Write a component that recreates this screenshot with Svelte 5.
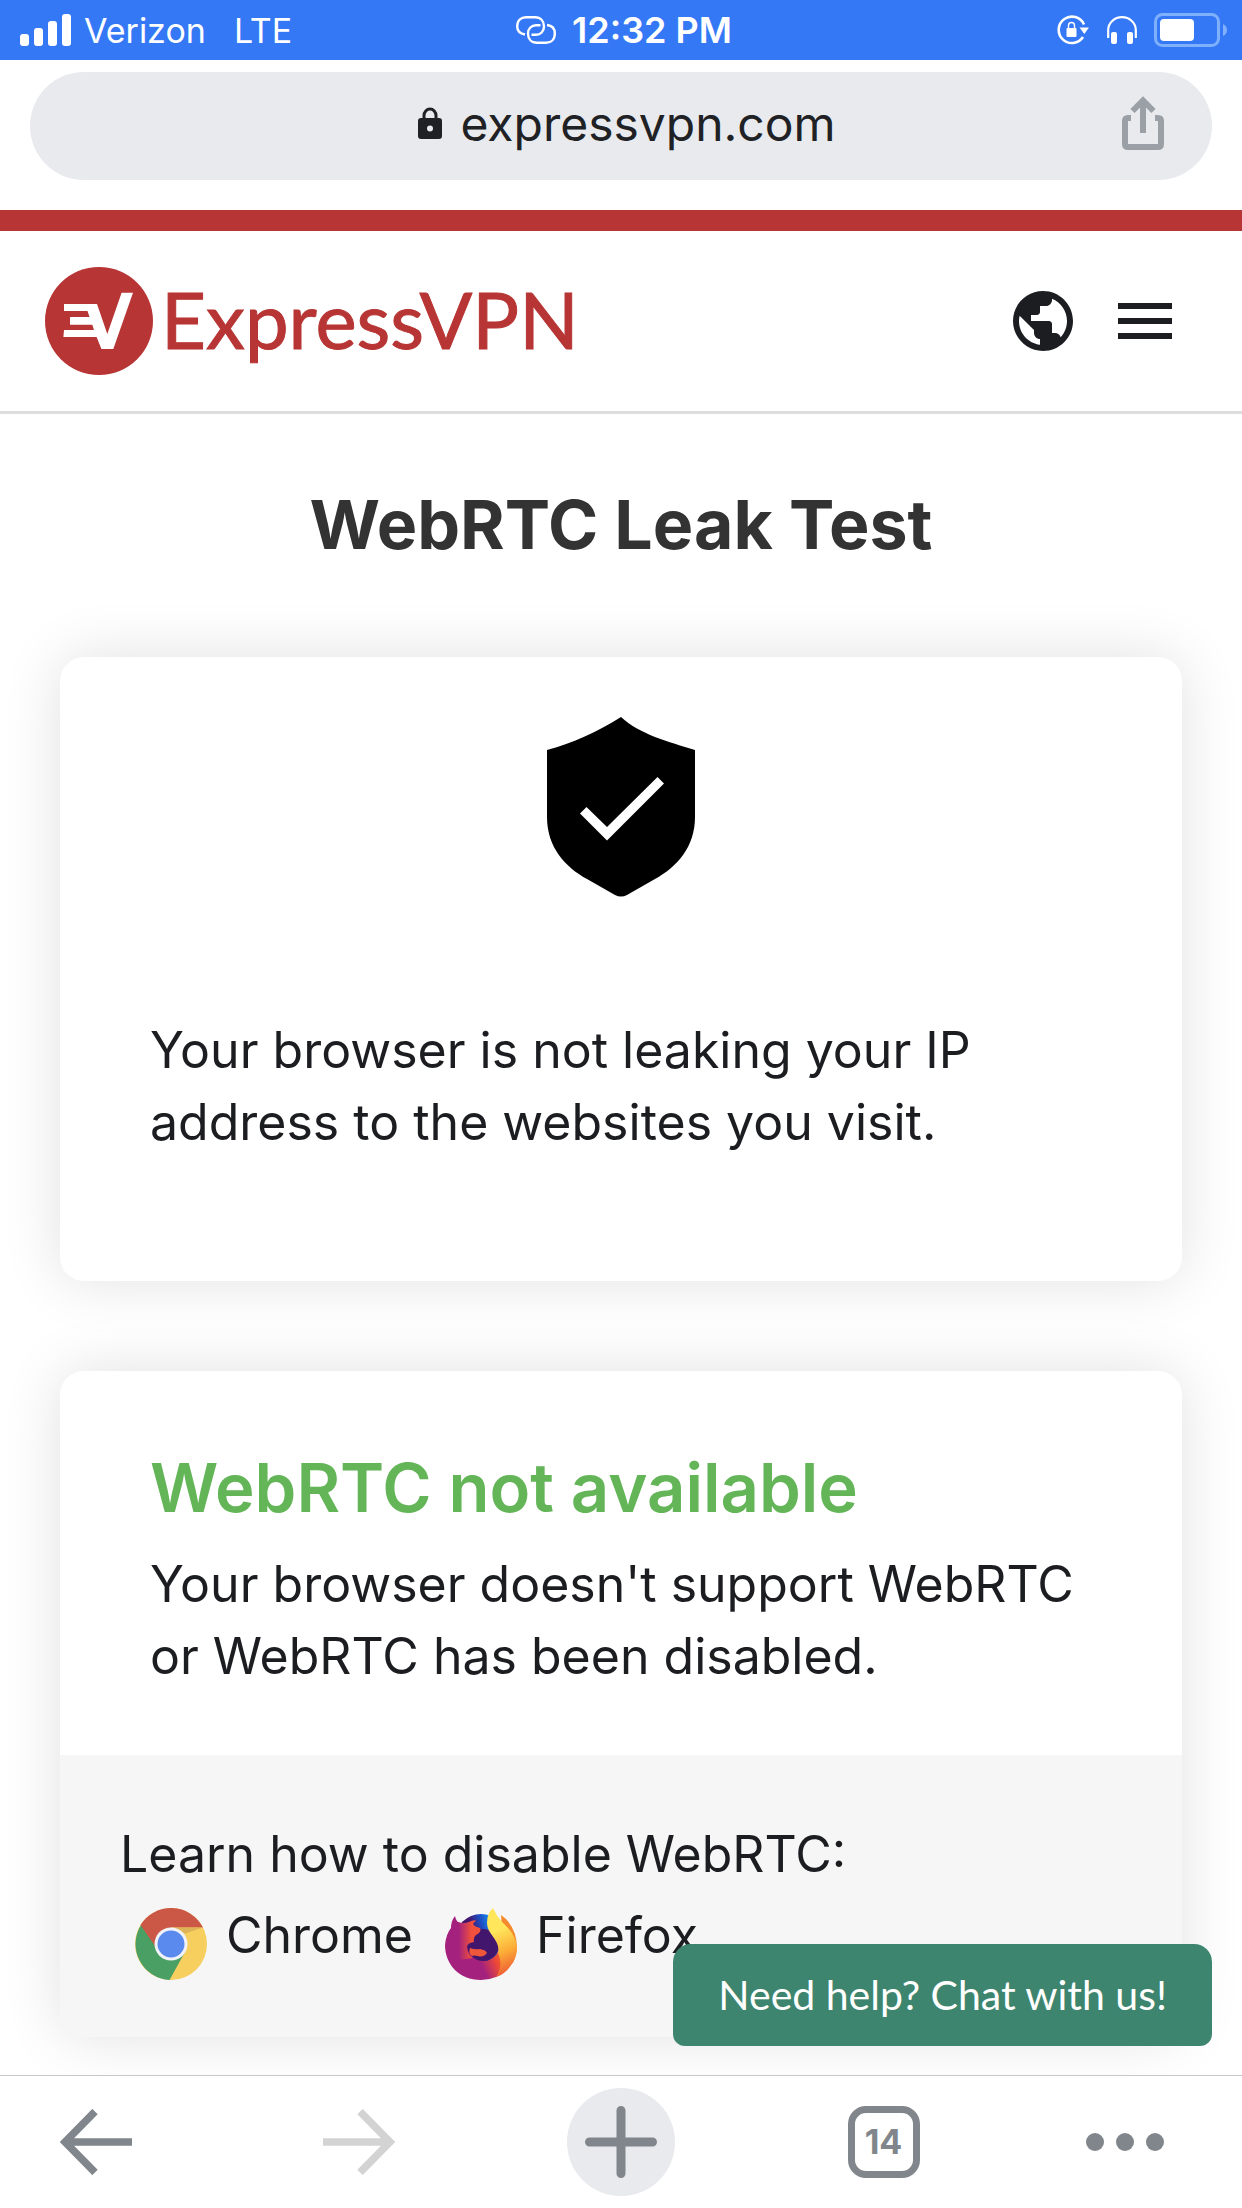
<script lang="ts">
  let host = "expressvpn.com";
  let openTabs = 14;
</script>

<div class="screen">
  <div class="status">
    <div class="status__side">
      <svg width="52" height="32" viewBox="0 0 52 32" fill="#fff">
        <rect x="0" y="20" width="9" height="12" rx="3" />
        <rect x="14" y="14" width="9" height="18" rx="3" />
        <rect x="28" y="7" width="9" height="25" rx="3" />
        <rect x="42" y="0" width="9" height="32" rx="3" />
      </svg>
      <span class="status__carrier">Verizon</span>
      <span>LTE</span>
    </div>
    <div class="status__time">
      <svg width="40" height="28" viewBox="0 0 40 28" fill="none" stroke="#fff" stroke-width="2.4">
        <path d="M9 18.500C4 17.500 1.200 14.500 1.200 10.500C1.200 4.500 5 1.200 10 1.200H19C24.500 1.200 28 5 28 10.500C28 15.500 24.500 18.800 20 18.800H15.500" />
        <path d="M31 9C36.500 9.500 38.800 13 38.800 17.500C38.800 23.500 35 26.800 30 26.800H21C15.500 26.800 12 23 12 17.500C12 12.500 15.500 9.200 20 9.200H24.500" />
      </svg>
      <span>12:32 PM</span>
    </div>
    <div class="status__side status__side--right">
      <svg width="33" height="30" viewBox="0 0 33 30">
        <path d="M27 9.500A13.200 13.200 0 1 0 26 22" fill="none" stroke="#fff" stroke-width="2.600" />
        <path d="M22.500 12.500h9.500l-4.700 6.500z" fill="#fff" />
        <rect x="9.500" y="13" width="10" height="9" rx="1" fill="#fff" />
        <path d="M11.500 13.500v-3a3 3 0 0 1 6 0v3" fill="none" stroke="#fff" stroke-width="1.400" />
      </svg>
      <svg width="30" height="28" viewBox="0 0 30 28">
        <path d="M1.200 22V14a13.800 12.800 0 0 1 27.600 0v8" fill="none" stroke="#fff" stroke-width="2.200" />
        <rect x="4" y="16" width="6" height="12" rx="2" fill="#fff" />
        <rect x="20" y="16" width="6" height="12" rx="2" fill="#fff" />
      </svg>
      <svg width="74" height="34" viewBox="0 0 74 34">
        <rect x="1.500" y="1.500" width="63" height="31" rx="7" fill="none" stroke="#7fb0fb" stroke-width="3" />
        <rect x="6" y="6" width="34" height="22" rx="4" fill="#fff" />
        <path d="M69 11q4 2 4 6t-4 6z" fill="#7fb0fb" />
      </svg>
    </div>
  </div>

  <div class="omnibox">
    <div class="omnibox__pill">
      <button class="omnibox__url">
        <svg width="24" height="32" viewBox="0 0 24 32">
          <path d="M6 12V8.500a6 6.500 0 0 1 12 0V12" fill="none" stroke="#202124" stroke-width="3" />
          <path d="M3 11h18a3 3 0 0 1 3 3v15a3 3 0 0 1-3 3H3a3 3 0 0 1-3-3V14a3 3 0 0 1 3-3zm9 7.500a3 3 0 1 0 0 6 3 3 0 0 0 0-6z" fill="#202124" fill-rule="evenodd" />
        </svg>
        {host}
      </button>
      <button class="omnibox__share" aria-label="Share">
        <svg width="42" height="54" viewBox="0 0 42 54" fill="none" stroke="#9aa0a6" stroke-width="6">
          <path d="M9 22H6q-3 0-3 3v23q0 3 3 3h30q3 0 3-3V25q0-3-3-3h-3" />
          <path d="M21 37V5M10.500 15 21 4.500 31.500 15" />
        </svg>
      </button>
    </div>
  </div>

  <header class="header">
    <a class="logo" href="#home">
      <svg width="108" height="108" viewBox="0 0 108 108">
        <circle cx="54" cy="54" r="54" fill="#b73534" />
        <path d="M19 37H52L62.300 67 76.600 25.700H88L68.300 82H56.400L51.600 70H18.400L19 63H49L47.300 57.700H25V50H44.500L42.500 44H19z" fill="#fff" />
      </svg>
      <span>ExpressVPN</span>
    </a>
    <div class="header__tools">
      <button aria-label="Language">
        <svg width="72" height="72" viewBox="0 0 24 24" fill="#1c1d21">
          <path d="M12 2C6.480 2 2 6.480 2 12s4.480 10 10 10 10-4.480 10-10S17.520 2 12 2zm-1 17.930c-3.950-.49-7-3.850-7-7.930 0-.62.080-1.210.21-1.790L9 15v1c0 1.100.9 2 2 2v1.930zm6.900-2.540c-.26-.81-1-1.390-1.900-1.390h-1v-3c0-.55-.45-1-1-1H8v-2h2c.55 0 1-.45 1-1V7h2c1.100 0 2-.9 2-2v-.41c2.930 1.190 5 4.060 5 7.410 0 2.080-.8 3.970-2.100 5.390z" />
        </svg>
      </button>
      <button aria-label="Menu">
        <svg width="72" height="72" viewBox="0 0 24 24" fill="#1c1d21">
          <path d="M3 18h18v-2H3v2zm0-5h18v-2H3v2zm0-7v2h18V6H3z" />
        </svg>
      </button>
    </div>
  </header>

  <main class="main">
    <h1>WebRTC Leak Test</h1>

    <section class="card card--result">
      <svg class="card__shield" width="148" height="180" viewBox="0 0 148 180">
        <path d="M74 0C92 17 122 25 148 33V100C148 130 130 150 108 162L80 178Q74 181 68 178L40 162C18 150 0 130 0 100V33C26 26 50 15 74 0z" />
        <path d="M33 96.500 39.500 90 60 110 110.500 60 117 66.500 60 123.500z" fill="#fff" />
      </svg>
      <p>Your browser is not leaking your IP address to the websites you visit.</p>
    </section>

    <section class="card">
      <div class="card__body">
        <h2>WebRTC not available</h2>
        <p>Your browser doesn't support WebRTC or WebRTC has been disabled.</p>
      </div>
      <div class="card__learn">
        <p>Learn how to disable WebRTC:</p>
        <div class="browsers">
          <a href="#chrome">
            <svg width="72" height="72" viewBox="0 0 72 72">
              <circle cx="36" cy="36" r="36" fill="#f7cf5f" />
              <path d="M6 17A36 36 0 0 0 34.500 72L50 44 36 36z" fill="#4a9f64" />
              <path d="M5.500 17A36 36 0 0 1 68 19.500H36L20 38z" fill="#cb5846" />
              <path d="M36 19.500h32l-18 6z" fill="#ddb455" />
              <circle cx="36" cy="36" r="16.500" fill="#f1f3f8" />
              <circle cx="36" cy="36" r="13.500" fill="#5a8aee" />
            </svg>
            Chrome
          </a>
          <a href="#firefox">
            <svg width="72" height="72" viewBox="0 0 72 72">
              <defs>
                <linearGradient id="globe" x1="0" y1="0.3" x2="1" y2="0">
                  <stop offset="0.3" stop-color="#43166e" />
                  <stop offset="0.5" stop-color="#1d4fc4" />
                  <stop offset="0.700" stop-color="#1c8fee" />
                </linearGradient>
                <linearGradient id="body" x1="0.2" y1="0.8" x2="1" y2="0.5">
                  <stop offset="0.35" stop-color="#a4217d" />
                  <stop offset="0.6" stop-color="#ee4a35" />
                  <stop offset="0.9" stop-color="#f58a2c" />
                </linearGradient>
                <linearGradient id="tail" x1="0.4" y1="0" x2="0.6" y2="1">
                  <stop offset="0.3" stop-color="#ffe65b" />
                  <stop offset="0.65" stop-color="#fbab36" />
                  <stop offset="1" stop-color="#ee5434" />
                </linearGradient>
                <linearGradient id="face" gradientUnits="userSpaceOnUse" x1="12" y1="0" x2="30" y2="0">
                  <stop offset="0.1" stop-color="#a4217d" />
                  <stop offset="0.8" stop-color="#f0503c" />
                </linearGradient>
              </defs>
              <circle cx="36" cy="32" r="26" fill="url(#globe)" />
              <path d="M10 8Q11 13 14 15L26 40Q31 54 42 53Q54 49 55 36L57 20L56 7L61 11Q72 23 72 40Q71 52 66 57Q60 66 51 69Q44 72 36 72C14 72 0 56 0 37Q1 26 6 20Q6 13 10 8z" fill="url(#body)" />
              <circle cx="38" cy="37" r="16" fill="#43166e" />
              <path d="M48 0Q51 7 57 14C67 23 72 31 72 42Q70 53 66 57Q60 66 51 69C57 60 56 52 53 45C56 32 42 27 42 15Q42 5 48 0z" fill="url(#tail)" />
              <path d="M13 14Q19 16 24 14Q30 11 31 13Q24 17 35 20Q37 24 31 27Q28 30 29 34Q22 35 22 39Q22 46 28 50L14 52Q6 28 13 14z" fill="url(#face)" />
              <path d="M25 40Q30 42 35 41Q41 42 42 45Q38 50 33 48Q29 47 27 48Q23 46 25 40z" fill="#f0573a" />
            </svg>
            Firefox
          </a>
        </div>
      </div>
    </section>

    <button class="chat">Need help? Chat with us!</button>
  </main>

  <nav class="toolbar">
    <button aria-label="Back">
      <svg width="72" height="66" viewBox="0 0 72 66" fill="none" stroke="#80868b" stroke-width="7.500">
        <path d="M72 33H8M35 2.500 5 33 35 63.500" />
      </svg>
    </button>
    <button aria-label="Forward" disabled>
      <svg width="72" height="66" viewBox="0 0 72 66" fill="none" stroke="#d3d3d3" stroke-width="7.500">
        <path d="M0 33H64M37 2.500 67 33 37 63.500" />
      </svg>
    </button>
    <button aria-label="New tab">
      <svg width="108" height="108" viewBox="0 0 108 108">
        <circle cx="54" cy="54" r="54" fill="#e8eaed" />
        <path d="M54 22.500V85.500M22.500 54H85.500" stroke="#80868b" stroke-width="9" stroke-linecap="round" />
      </svg>
    </button>
    <button aria-label="Tabs"><span class="toolbar__tabs">{openTabs}</span></button>
    <button class="toolbar__more" aria-label="More">
      <svg width="78" height="18" viewBox="0 0 78 18" fill="#80868b">
        <circle cx="9" cy="9" r="9" />
        <circle cx="39" cy="9" r="9" />
        <circle cx="69" cy="9" r="9" />
      </svg>
    </button>
  </nav>
</div>

<style>
  :global(body) {
    background: #fff;
  }

  .screen {
    display: flex;
    flex-direction: column;
    min-height: 100vh;
    font-family: Inter, sans-serif;
    color: #1c1d21;
  }

  svg {
    display: block;
    flex: none;
  }

  button {
    padding: 0;
    border: none;
    background: none;
    font: inherit;
    color: inherit;
    cursor: pointer;
  }

  a {
    color: inherit;
    text-decoration: none;
  }

  h1,
  h2,
  p {
    margin: 0;
  }

  .status {
    display: grid;
    grid-template-columns: 1fr auto 1fr;
    align-items: center;
    height: 60px;
    padding: 0 14px 0 20px;
    background: #3478f6;
    color: #fff;
    font-size: 34px;
  }

  .status__side,
  .status__time {
    display: flex;
    align-items: center;
  }

  .status__side--right {
    justify-content: flex-end;
    gap: 17px;
  }

  .status__carrier {
    margin: 0 28px 0 12px;
  }

  .status__time {
    gap: 16px;
    font-size: 36px;
    font-weight: 600;
  }

  .omnibox {
    padding: 12px 30px 30px;
  }

  .omnibox__pill {
    display: grid;
    grid-template-columns: 1fr auto 1fr;
    align-items: center;
    height: 102px;
    padding: 0 48px 6px;
    border-radius: 54px;
    background: #e8eaed;
    color: #202124;
  }

  .omnibox__url {
    grid-column: 2;
    display: flex;
    align-items: center;
    gap: 18px;
    padding-left: 12px;
    font-size: 48px;
  }

  .omnibox__share {
    justify-self: end;
  }

  .header {
    display: flex;
    align-items: center;
    justify-content: space-between;
    height: 180px;
    padding: 0 61px 0 45px;
    border-top: 21px solid #b73534;
    border-bottom: 3px solid #ddd;
  }

  .logo {
    display: flex;
    align-items: center;
    gap: 8px;
    color: #b73534;
    font-family: Lato, sans-serif;
    font-size: 78px;
    line-height: 90px;
    -webkit-text-stroke: 1px #b73534;
  }

  .logo span {
    padding-bottom: 4px;
  }

  .header__tools {
    display: flex;
    gap: 30px;
  }

  .main {
    position: relative;
    flex: 1;
    padding: 74px 60px 38px;
    font-size: 50px;
    line-height: 72px;
  }

  h1 {
    margin-bottom: 97px;
    color: #333;
    font-size: 68px;
    line-height: 72px;
    text-align: center;
  }

  h2 {
    margin-bottom: 24px;
    color: #63b558;
    font-size: 67px;
    font-weight: 600;
    line-height: 72px;
  }

  .card {
    border-radius: 24px;
    background: #fff;
    box-shadow: 0 0 60px rgba(0, 0, 0, 0.12);
  }

  .card--result {
    margin-bottom: 90px;
    padding: 60px 90px 123px;
  }

  .card__shield {
    margin: 0 auto 117px;
  }

  .card__body {
    padding: 81px 90px 63px;
  }

  .card__learn {
    padding: 63px 60px 57px;
    border-radius: 0 0 24px 24px;
    background: #f6f6f6;
  }

  .browsers {
    display: flex;
    gap: 32px;
    padding-left: 15px;
    line-height: 90px;
  }

  .browsers a {
    display: flex;
    align-items: flex-end;
    gap: 19px;
  }

  .chat {
    position: absolute;
    right: 30px;
    bottom: 29px;
    height: 102px;
    padding: 0 45px;
    border-radius: 18px 18px 12px 12px;
    background: #3d856e;
    color: #fff;
    font-family: Lato, sans-serif;
    font-size: 41px;
  }

  .toolbar {
    position: relative;
    display: flex;
    align-items: center;
    justify-content: space-between;
    height: 132px;
    padding: 0 36px;
    border-top: 1px solid #c8c8c8;
    background: #fff;
  }

  .toolbar button {
    display: flex;
    align-items: center;
    justify-content: center;
    width: 120px;
    height: 108px;
  }

  .toolbar .toolbar__more {
    justify-content: flex-start;
  }

  .toolbar__tabs {
    box-sizing: border-box;
    width: 72px;
    border: 7px solid #80868b;
    border-radius: 18px;
    color: #80868b;
    font-size: 34px;
    font-weight: 700;
    line-height: 58px;
    text-align: center;
  }
</style>
